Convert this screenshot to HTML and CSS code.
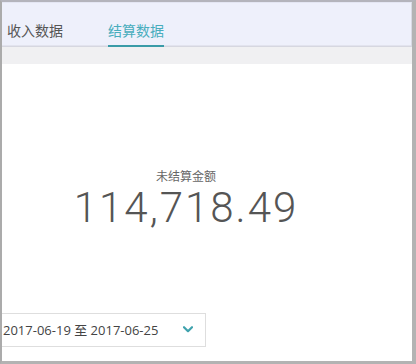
FILE: index.html
```html
<!DOCTYPE html>
<html lang="zh">
<head>
<meta charset="utf-8">
<link rel="stylesheet" href="styles.css">
</head>
<body>
<div class="frame">
  <div class="tabs">
    <div class="tab">收入数据</div>
    <div class="tab active">结算数据</div>
  </div>
  <div class="band"></div>
  <div class="content">
    <div class="stat">
      <div class="label">未结算金额</div>
      <div class="amount">114,718.49</div>
    </div>
    <div class="range">
      <span class="range-text">2017-06-19 至 2017-06-25</span>
      <svg class="chev" width="10" height="7" viewBox="0 0 10 7"><path d="M1 1.2 L5 5.2 L9 1.2" fill="none" stroke="#3fa2ad" stroke-width="2.2" stroke-linecap="round" stroke-linejoin="round"/></svg>
    </div>
  </div>
</div>
</body>
</html>
```

FILE: styles.css
```css
html, body {
  margin: 0;
  padding: 0;
  background: #fff;
}
.frame {
  box-sizing: border-box;
  width: 416px;
  height: 364px;
  border-top: 2px solid #b4b4bc;
  border-left: 2px solid #ababab;
  border-right: 4px solid #b3b3b3;
  border-bottom: 3px solid #b3b3b3;
  display: flex;
  flex-direction: column;
  overflow: hidden;
  font-family: "Noto Sans CJK SC", "Open Sans", sans-serif;
}
.tabs {
  background: #eef0fb;
  border-top: 1px solid #e4e6f3;
  box-sizing: border-box;
  height: 45px;
  border-bottom: 1px solid #d6d7e0;
  border-right: 1px solid #d8d9e4;
  box-shadow: inset 0 -5px 0 -4px #e2e3ee;
  display: flex;
  align-items: flex-start;
  padding-left: 5px;
}
.tab {
  font-size: 14px;
  line-height: 20px;
  padding-top: 17px;
  color: #555;
  box-sizing: border-box;
  height: 44px;
}
.tab.active {
  margin-left: 45px;
  color: #48adbd;
  border-bottom: 3px solid #3a9ba8;
  height: 45px;
  margin-bottom: -1px;
}
.band {
  height: 17px;
  background: #f0f0f2;
}
.content {
  flex: 1;
  display: flex;
  flex-direction: column;
  background: #fff;
}
.stat {
  padding-top: 104px;
  padding-right: 42px;
  display: flex;
  flex-direction: column;
  align-items: center;
}
.label {
  font-size: 12px;
  line-height: 16px;
  color: #666;
}
.amount {
  margin-top: 2px;
  font-family: Roboto, "Liberation Sans", sans-serif;
  font-weight: 300;
  font-size: 42px;
  line-height: 44px;
  letter-spacing: 2px;
  color: #555;
}
.range {
  margin-top: 83px;
  width: 204px;
  height: 34px;
  box-sizing: border-box;
  border: 1px solid #dedede;
  border-left: none;
  display: flex;
  align-items: center;
  justify-content: space-between;
  padding-left: 1px;
  padding-right: 12px;
}
.range-text {
  font-family: "Open Sans", "Noto Sans CJK SC", sans-serif;
  font-size: 13px;
  line-height: 32px;
  color: #444;
}
.chev {
  display: block;
  margin-top: -1px;
}
```
